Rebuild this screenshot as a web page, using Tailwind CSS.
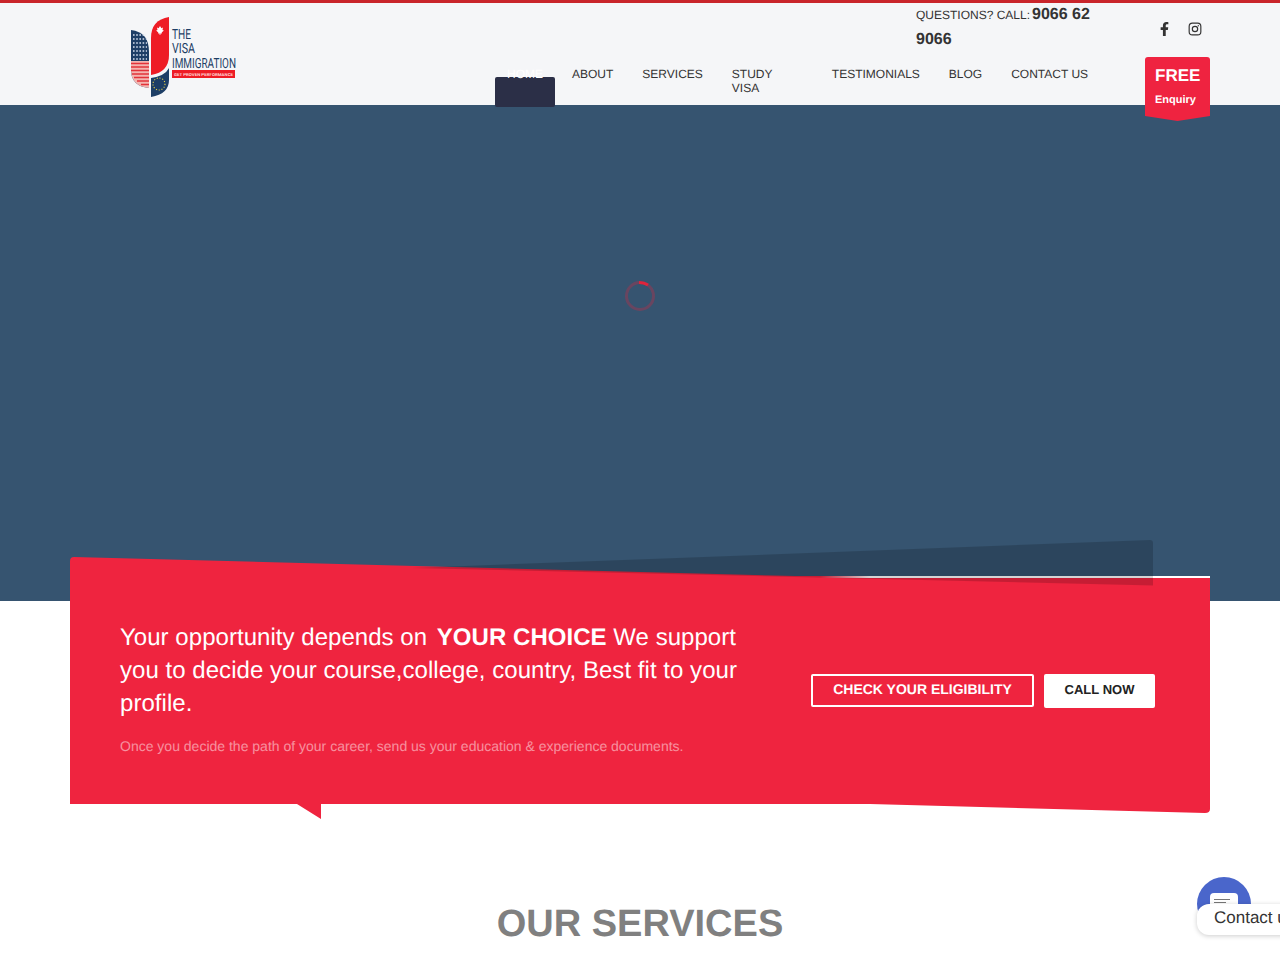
<!DOCTYPE html>
<html lang="en">
<head>
    <meta charset="UTF-8" />
    <meta name="viewport" content="width=device-width, initial-scale=1.0" />
    <title>The Visa Immigration</title>
    <script src="https://cdn.jsdelivr.net/npm/@tailwindcss/browser@4"></script>
</head>
<body class="bg-white font-['Liberation_Sans',Arial,sans-serif] [text-rendering:geometricPrecision]">
<div class="relative w-[1280px] h-[960px] overflow-hidden">

    <!-- Header -->
    <header class="relative z-20 h-[105px] bg-[#f5f6f8] border-t-[3px] border-[#c9252b]">
        <div class="flex w-[1080px] ml-[130px]">
            <!-- Logo -->
            <div class="w-[377px] shrink-0">
                <svg class="block" width="110" height="100" viewBox="130 3 110 100">
                    <path d="M131 30 Q149 32 149 52 V88 Q131 86 131 70 Z" fill="#1d3e66"/>
                    <path d="M131 61 H149 V88 Q131 86 131 70 Z" fill="#f3b5b0"/>
                    <path d="M131 63.5 H149 M131 67 H149 M131 70.5 H149 M132 74 H149 M134 77.5 H149 M137 81 H149 M141 84.5 H149" stroke="#e2333a" stroke-width="1.5"/>
                    <path d="M133 35 H146 M133 39 H147 M133 43 H147 M133 47 H147 M133 51 H147 M133 55 H147 M133 59 H147" stroke="#d6dfee" stroke-width="1.6" stroke-dasharray="1.6 1.6"/>
                    <path d="M169 17 V55 Q169 72 151 75 V38 Q151 20 169 17 Z" fill="#ee1c25"/>
                    <path d="M160 26 l1.4 2.2 1.6 -.6 -.5 2.4 1.4 .4 -2.2 2.2 .2 1 h-1.5 v1.4 h-.8 v-1.4 h-1.5 l.2 -1 -2.2 -2.2 1.4 -.4 -.5 -2.4 1.6 .6 Z" fill="#fff"/>
                    <path d="M151 78 Q165 76 169 68 V80 Q169 94 151 97 Z" fill="#1d3e66"/>
                    <circle cx="159" cy="84" r="6" fill="none" stroke="#e7d24a" stroke-width="1.1" stroke-dasharray="1.1 1.7"/>
                    <g fill="#1d3e66" font-family="'Roboto',sans-serif" font-weight="400" font-size="14">
                        <text x="172" y="39" textLength="19" lengthAdjust="spacingAndGlyphs">THE</text>
                        <text x="172" y="53" textLength="23" lengthAdjust="spacingAndGlyphs">VISA</text>
                        <text x="172" y="68" textLength="64" lengthAdjust="spacingAndGlyphs">IMMIGRATION</text>
                    </g>
                    <rect x="172" y="70" width="63" height="8" fill="#ee1c25"/>
                    <text x="174" y="76" textLength="59" lengthAdjust="spacingAndGlyphs" font-family="'Roboto',sans-serif" font-weight="700" font-size="4" fill="#ffd9d9">GET PROVEN PERFORMANCE</text>
                </svg>
            </div>

            <!-- Phone and nav -->
            <div class="w-[638px] shrink-0">
                <div class="h-[65px] pl-[409px]">
                    <p class="w-[176px] -mt-[1px] text-[16px] leading-[25px] font-bold text-[#333]"><span class="text-[12px] leading-[12px] font-normal mr-[2px]">QUESTIONS? CALL:</span>9066 62 9066</p>
                </div>
                <nav class="flex gap-[29px] text-[12px] leading-[14px] text-[#333]">
                    <a href="#" class="relative text-white w-[36px]">
                        <span class="absolute left-[-12px] top-[10px] w-[60px] h-[30px] bg-[#2b2f47] rounded-[2px]"></span>
                        <span class="relative">HOME</span>
                    </a>
                    <a href="#">ABOUT</a>
                    <a href="#">SERVICES</a>
                    <a href="#" class="w-[71px]">STUDY VISA</a>
                    <a href="#">TESTIMONIALS</a>
                    <a href="#">BLOG</a>
                    <a href="#">CONTACT US</a>
                </nav>
            </div>

            <!-- Social and enquiry -->
            <div class="w-[65px] shrink-0">
                <div class="h-[54px] flex items-start pt-[19px] pl-[15px] gap-[19px] text-[#333]">
                    <svg width="9" height="14" viewBox="0 0 320 512" fill="currentColor" preserveAspectRatio="none"><path d="M279 288l14-93h-89v-60c0-25 12-50 52-50h41V6s-37-6-72-6c-73 0-121 44-121 125v70H23v93h81v224h100V288z"/></svg>
                    <svg width="14" height="14" viewBox="0 0 24 24" fill="none" stroke="currentColor" stroke-width="2"><rect x="2" y="2" width="20" height="20" rx="5.5"/><circle cx="12" cy="12" r="4.6"/><circle cx="17.6" cy="6.4" r="1.1" fill="currentColor" stroke="none"/></svg>
                </div>
                <a href="#" class="block h-[64px] bg-[#ef2340] rounded-[3px] [clip-path:polygon(0_0,100%_0,100%_92%,50%_100%,0_92%)] pl-[10px] pt-[8px] text-white font-bold">
                    <span class="block text-[17px] leading-[22px]">FREE</span>
                    <span class="block text-[11px] leading-[13px] mt-[7px]">Enquiry</span>
                </a>
            </div>
        </div>
    </header>

    <!-- Hero with loader -->
    <section class="h-[496px] bg-[#365470] flex justify-center pt-[175px]">
        <svg width="32" height="32" viewBox="0 0 32 32" fill="none">
            <circle cx="16" cy="16" r="13.5" stroke="#e0243c" stroke-opacity=".3" stroke-width="3"/>
            <path d="M15 2.5 Q20 2.5 24 5" stroke="#e0243c" stroke-width="3"/>
        </svg>
    </section>

    <!-- Red call-to-action card -->
    <section class="relative z-10 w-[1140px] h-[280px] ml-[70px] mt-[-61px]">
        <svg class="absolute inset-0" width="1140" height="280" viewBox="0 0 1140 280">
            <defs>
                <linearGradient id="lineFade" x1="750" x2="800" y1="0" y2="0" gradientUnits="userSpaceOnUse">
                    <stop offset="0" stop-color="#fff" stop-opacity="0"/>
                    <stop offset="1" stop-color="#fff"/>
                </linearGradient>
            </defs>
            <path d="M4 17 L725 36 H1140 V269 Q1140 273 1135 273 L800 264 H251 V279 L227 264 H0 V21 Q0 17 4 17 Z" fill="#ef243f"/>
            <rect x="750" y="36" width="390" height="2" fill="url(#lineFade)"/>
            <path d="M342 28 L1080 0 Q1083 0 1083 3 V45.4 Z" fill="#000" fill-opacity=".17"/>
        </svg>
        <div class="relative flex justify-between pl-[50px] pr-[55px] pt-[81px]">
            <div class="w-[640px]">
                <h2 class="text-[24px] leading-[33px] tracking-[0.04px] text-white w-[630px]">Your opportunity depends on <strong class="font-bold ml-[3px]">YOUR CHOICE</strong> We support you to decide your course,college, country, Best fit to your profile.</h2>
                <p class="mt-[16px] text-[14px] leading-[20px] text-white/50">Once you decide the path of your career, send us your education &amp; experience documents.</p>
            </div>
            <div class="flex items-start gap-[10px] pt-[53px]">
                <a href="#" class="h-[33px] w-[223px] border-2 border-white rounded-[2px] text-center text-white text-[14px] font-bold leading-[27px]">CHECK YOUR ELIGIBILITY</a>
                <a href="#" class="h-[34px] w-[111px] bg-white rounded-[2px] text-center text-[#222] text-[13px] font-bold leading-[32px]">CALL NOW</a>
            </div>
        </div>
    </section>

    <!-- Services heading -->
    <h2 class="mt-[81px] text-center text-[38px] leading-[46px] font-bold text-[#808080]">OUR SERVICES</h2>

    <!-- Contact widget -->
    <div class="absolute left-[1197px] top-[877px] w-[54px] h-[54px] rounded-full bg-[#4a66cb] z-30 flex justify-center pt-[16px]">
        <div class="w-[28px] h-[26px] bg-white rounded-[4px] px-[4px] pt-[6px]">
            <div class="w-[16px] h-[1px] bg-[#777]"></div>
            <div class="w-[12px] h-[1px] bg-[#777] mt-[2px]"></div>
        </div>
    </div>
    <div class="absolute left-[1197px] top-[904px] w-[130px] h-[31px] bg-white rounded-[12px] shadow-[0_1px_5px_rgba(0,0,0,0.2)] z-30 pl-[17px] text-[17px] leading-[27px] text-[#333] whitespace-nowrap">Contact us</div>
</div>
</body>
</html>
